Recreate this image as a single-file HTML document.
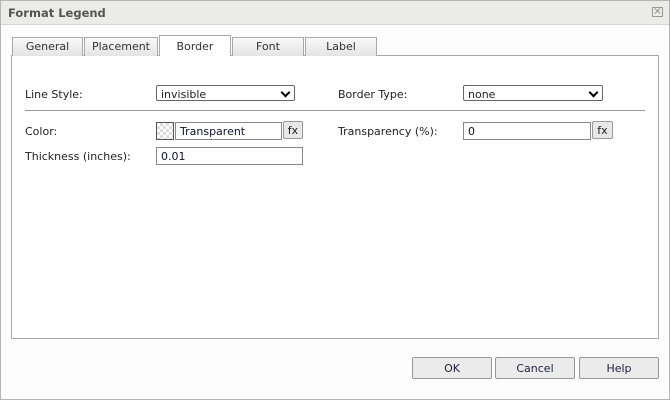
<!DOCTYPE html>
<html><head><style>
body{margin:0;width:670px;height:400px;background:#fff;font-family:"DejaVu Sans","Liberation Sans",sans-serif;font-size:11px;color:#222;position:relative;overflow:hidden}
.a{position:absolute;box-sizing:border-box}
.dlg{left:0;top:0;width:670px;height:400px;border:1px solid #b5b5b5;background:#fcfdfc}
.title{left:1px;top:1px;width:668px;height:24px;background:#ebecea;border-bottom:1px solid #d4d4d4;font-weight:bold;color:#555;font-size:11.5px;padding:5px 0 0 7px}
.tab{height:19px;top:37px;border:1px solid #aaa;border-bottom:none;background:linear-gradient(#f8f8f8,#e4e4e4);text-align:center;color:#333;padding-top:2px}
.sel{top:35px;height:21px;background:#fff;padding-top:4px;z-index:2}
.panel{left:11px;top:55px;width:648px;height:284px;border:1px solid #aaa;background:#fff}
.lbl{color:#222}
.sl{border:1px solid #666;border-radius:2px;height:16px;padding:2px 0 0 4px;background:#fff}
.sl:after{content:"";position:absolute;right:5px;top:3px;width:5px;height:5px;border-right:2px solid #000;border-bottom:2px solid #000;transform:rotate(45deg)}
.in{border:1px solid #888;height:18px;padding:2px 0 0 4px;background:#fff;color:#113}
.fx{border:1px solid #999;border-radius:2px;background:#e8e8e8;height:18px;text-align:center;padding-top:2px}
.btn{top:357px;height:22px;border:1px solid #999;border-radius:2px;background:#ebebeb;text-align:center;padding-top:4px;color:#224}
</style></head><body>
<div class="a dlg"></div>
<div class="a title">Format Legend</div>
<div class="a" style="left:652px;top:7px;width:11px;height:10px;border:1px solid #999;color:#888;font-size:10px;line-height:8px;text-align:center">×</div>
<div class="a panel"></div>
<div class="a tab" style="left:12px;width:71px">General</div>
<div class="a tab" style="left:84px;width:74px">Placement</div>
<div class="a tab sel" style="left:159px;width:72px">Border</div>
<div class="a tab" style="left:232px;width:72px">Font</div>
<div class="a tab" style="left:305px;width:72px">Label</div>
<div class="a lbl" style="left:25px;top:88px">Line Style:</div>
<div class="a sl" style="left:156px;top:85px;width:139px">invisible</div>
<div class="a lbl" style="left:338px;top:88px">Border Type:</div>
<div class="a sl" style="left:463px;top:85px;width:140px">none</div>
<div class="a" style="left:25px;top:110px;width:620px;height:1px;background:#999"></div>
<div class="a lbl" style="left:25px;top:125px">Color:</div>
<div class="a" style="left:156px;top:122px;width:18px;height:18px;border:1px solid #555;background:repeating-conic-gradient(#ddd 0 25%,#fff 0 50%) 0 0/6px 6px"></div>
<div class="a in" style="left:175px;top:122px;width:107px">Transparent</div>
<div class="a fx" style="left:283px;top:121px;width:20px">fx</div>
<div class="a lbl" style="left:338px;top:125px">Transparency (%):</div>
<div class="a in" style="left:463px;top:122px;width:128px">0</div>
<div class="a fx" style="left:592px;top:121px;width:21px">fx</div>
<div class="a lbl" style="left:25px;top:150px">Thickness (inches):</div>
<div class="a in" style="left:156px;top:147px;width:147px">0.01</div>
<div class="a btn" style="left:412px;width:80px">OK</div>
<div class="a btn" style="left:495px;width:80px">Cancel</div>
<div class="a btn" style="left:579px;width:80px">Help</div>
</body></html>
